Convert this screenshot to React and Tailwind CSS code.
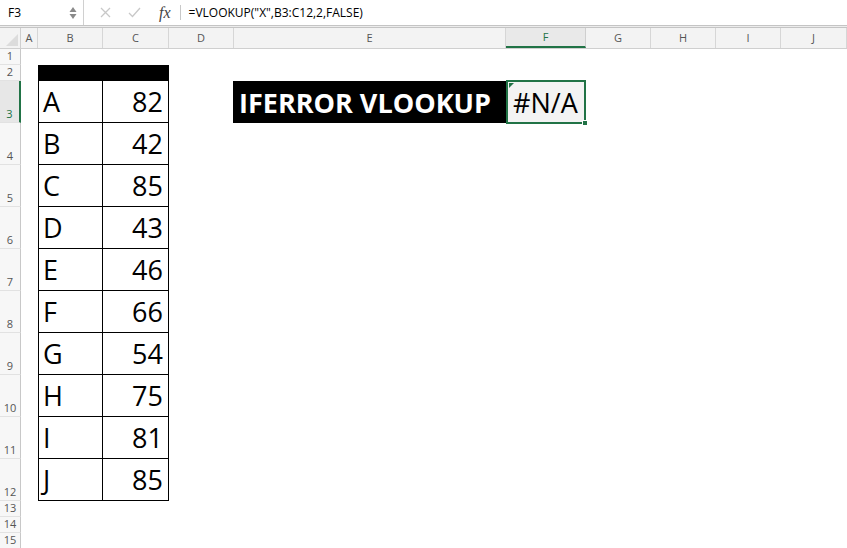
import React from 'react';

const cols = [
  { key: 'A', w: 'w-[17px]' },
  { key: 'B', w: 'w-[65px]' },
  { key: 'C', w: 'w-[66px]' },
  { key: 'D', w: 'w-[65px]' },
  { key: 'E', w: 'w-[272px]' },
  { key: 'F', w: 'w-[80px]' },
  { key: 'G', w: 'w-[65px]' },
  { key: 'H', w: 'w-[65px]' },
  { key: 'I', w: 'w-[65px]' },
  { key: 'J', w: 'w-[66px]' },
];

const data = [
  ['A', 82], ['B', 42], ['C', 85], ['D', 43], ['E', 46],
  ['F', 66], ['G', 54], ['H', 75], ['I', 81], ['J', 85],
];

const font = { fontFamily: '"Open Sans", "Noto Sans", sans-serif' };

const RowHead = ({ n, h, active }) => (
  <div
    className={`w-[21px] shrink-0 ${h} flex items-end justify-center pb-[1px] text-[11px] leading-none border-b border-[#e2e2e2] ${
      active ? 'bg-[#e7e7e7] text-[#217346] border-r-2 border-r-[#217346]' : 'bg-[#f7f7f7] text-[#555] border-r border-r-[#c8c8c8]'
    }`}
  >
    <span className="mb-[2px]">{n}</span>
  </div>
);

export default function App() {
  return (
    <div className="w-[847px] h-[548px] bg-white overflow-hidden" style={font}>
      {/* formula bar */}
      <div className="h-[25px] flex items-center bg-white text-[12px] text-black">
        <div className="w-[84px] h-full flex items-center justify-between pl-2 pr-[6px] border-r border-[#d0d0d0]">
          <span>F3</span>
          <svg width="8" height="16" viewBox="0 0 8 16">
            <path d="M4 2 L7.5 7 L0.5 7 Z" fill="#8a8a8a" />
            <path d="M4 14 L7.5 9 L0.5 9 Z" fill="#8a8a8a" />
          </svg>
        </div>
        <div className="flex items-center pl-[16px] gap-[17px]">
          <svg width="11" height="11" viewBox="0 0 11 11">
            <path d="M1 1 L10 10 M10 1 L1 10" stroke="#c8c8c8" strokeWidth="1.3" />
          </svg>
          <svg width="13" height="11" viewBox="0 0 13 11">
            <path d="M1 6 L4.5 9.5 L12 1" stroke="#c8c8c8" strokeWidth="1.3" fill="none" />
          </svg>
          <span
            className="italic text-[16px] text-[#444] leading-none ml-[1px]"
            style={{ fontFamily: '"Liberation Serif", serif' }}
          >
            fx
          </span>
        </div>
        <div className="ml-[9px] h-[15px] border-l border-[#c8c8c8]" />
        <span className="pl-[8px]">=VLOOKUP("X",B3:C12,2,FALSE)</span>
      </div>
      <div className="h-[3px] border-t border-b border-[#c4c4c4] bg-[#ececec]" />

      {/* column headers */}
      <div className="flex h-[21px] bg-[#f3f3f3] border-b border-[#cfcfcf]">
        <div className="w-[21px] shrink-0 border-r border-[#cfcfcf] relative overflow-hidden">
          <svg className="absolute right-[2px] bottom-[2px]" width="12" height="12" viewBox="0 0 12 12">
            <path d="M12 0 L12 12 L0 12 Z" fill="#dcdcdc" />
          </svg>
        </div>
        {cols.map((c) => (
          <div
            key={c.key}
            className={`${c.w} shrink-0 flex items-center justify-center text-[11px] ${
              c.key === 'F'
                ? 'bg-[#e9e9e9] text-[#217346] border-b-2 border-[#217346] border-r border-r-[#cfcfcf]'
                : 'text-[#555] border-r border-[#d6d6d6]'
            }`}
          >
            {c.key}
          </div>
        ))}
      </div>

      {/* row 1 */}
      <div className="flex h-[16px]">
        <RowHead n={1} h="h-[16px]" />
      </div>
      {/* row 2 */}
      <div className="flex h-[16px]">
        <RowHead n={2} h="h-[16px]" />
        <div className="w-[17px] shrink-0" />
        <div className="w-[131px] shrink-0 bg-black" />
      </div>

      {/* rows 3-12 */}
      {data.map(([letter, num], i) => (
        <div key={letter} className="flex h-[42px]">
          <RowHead n={i + 3} h="h-[42px]" active={i === 0} />
          <div className="w-[17px] shrink-0" />
          <div className="w-[65px] shrink-0 h-full border-l border-b border-r border-black flex items-center pl-[4px] text-[27px] leading-none text-black">
            {letter}
          </div>
          <div className="w-[66px] shrink-0 h-full border-b border-r border-black flex items-center justify-end pr-[5px] text-[27px] leading-none text-black">
            {num}
          </div>
          {i === 0 && (
            <>
              <div className="w-[64px] shrink-0" />
              <div className="w-[273px] shrink-0 h-full bg-black text-white font-bold text-[27px] leading-none flex items-center pl-[6px]">
                IFERROR VLOOKUP
              </div>
              <div className="w-[80px] shrink-0 relative -my-[1px] h-[44px] border-2 border-[#217346] bg-[#f3f3f3] flex items-center pl-[5px] text-[27px] leading-none text-black">
                <svg className="absolute left-[1px] top-[1px]" width="5" height="5" viewBox="0 0 5 5">
                  <path d="M0 0 L5 0 L0 5 Z" fill="#217346" />
                </svg>
                #N/A
                <div className="absolute -right-[4px] -bottom-[4px] w-[6px] h-[6px] bg-[#217346] border border-white" />
              </div>
            </>
          )}
        </div>
      ))}

      {/* rows 13-15 */}
      {[13, 14, 15].map((n) => (
        <div key={n} className="flex h-[16px]">
          <RowHead n={n} h="h-[16px]" />
        </div>
      ))}
    </div>
  );
}
